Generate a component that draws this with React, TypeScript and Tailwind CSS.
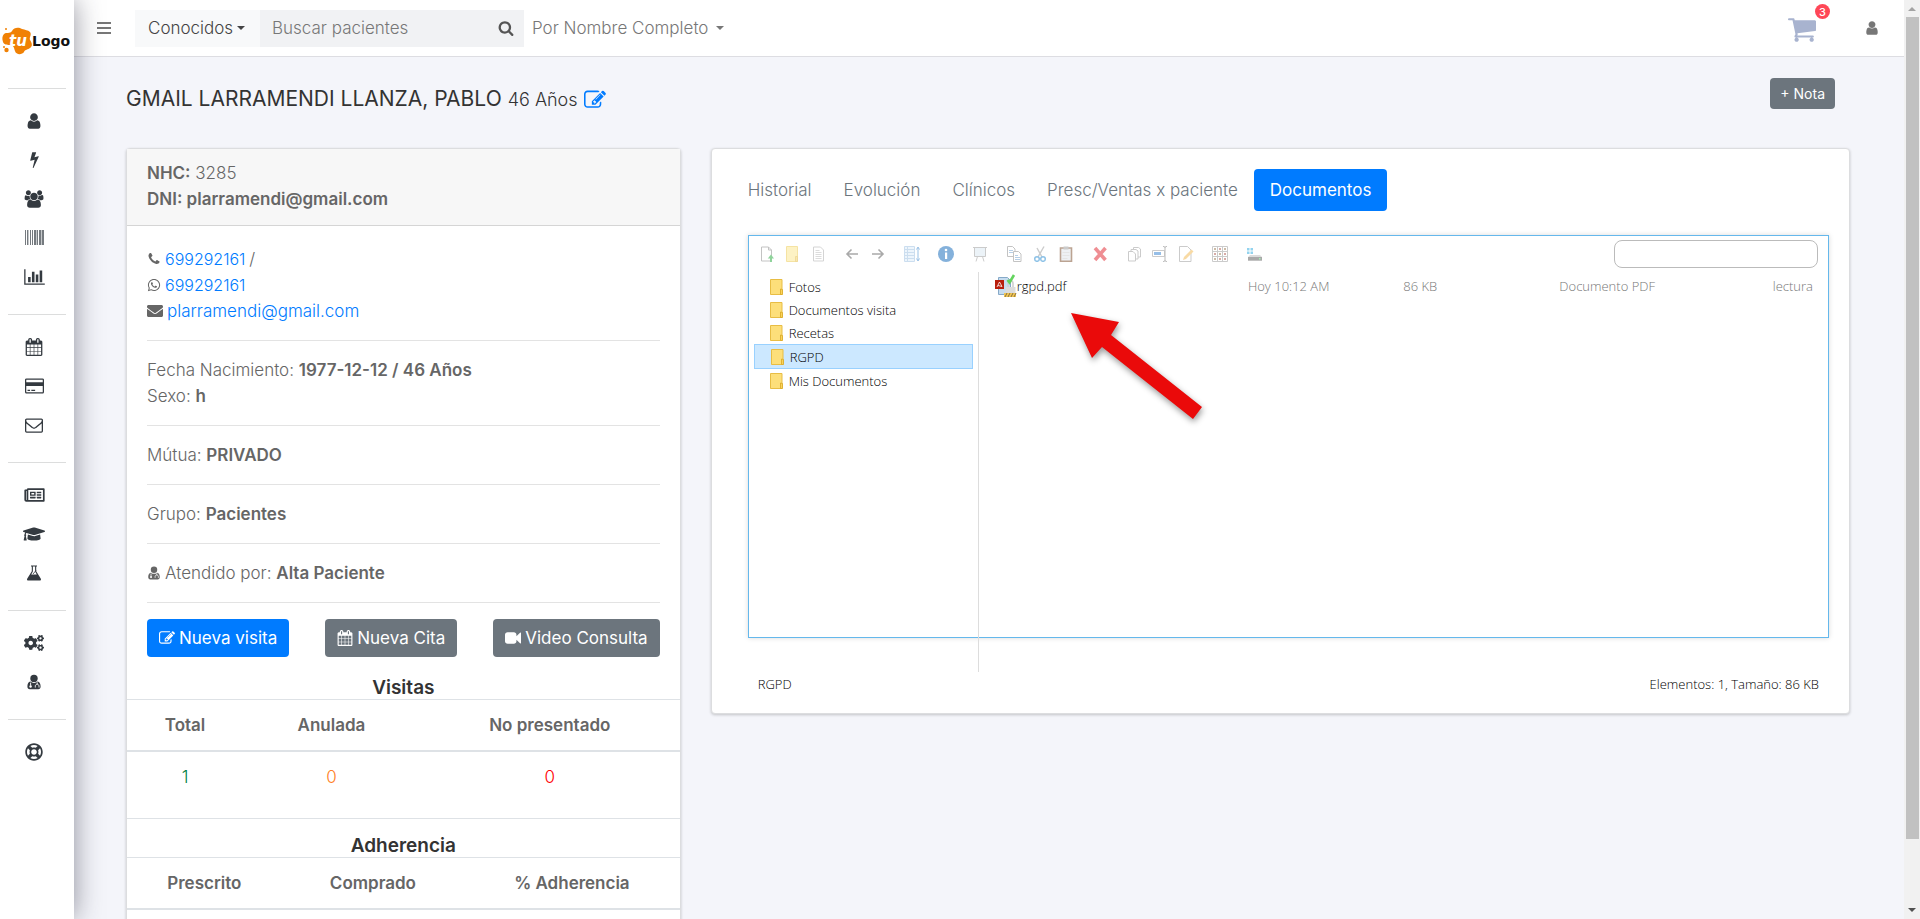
import type { ReactNode } from 'react';
import { FaCogs, FaEnvelope, FaGraduationCap, FaRegLifeRing, FaRegNewspaper, FaWhatsapp } from 'react-icons/fa';

interface GlyphProps {
  d: string;
  className?: string;
  box?: string;
}

const paths = {
  user: 'M1536 1399q0 109-62.5 187t-150.5 78h-854q-88 0-150.5-78t-62.5-187q0-85 8.5-160.5t31.5-152 58.5-131 94-89 134.5-34.5q131 128 313 128t313-128q76 0 134.5 34.5t94 89 58.5 131 31.5 152 8.5 160.5zm-256-887q0 159-112.5 271.5t-271.5 112.5-271.5-112.5-112.5-271.5 112.5-271.5 271.5-112.5 271.5 112.5 112.5 271.5z',
  bolt: 'M1333 566q18 20 7 44l-540 1157q-13 25-42 25-4 0-14-2-17-5-25.5-19t-4.5-30l197-808-406 101q-4 1-12 1-18 0-31-11-18-15-13-39l201-825q4-14 16-23t28-9h328q19 0 32 12.5t13 29.5q0 8-5 18l-171 463 396-98q8-2 12-2 19 0 34 15z',
  users: 'M657 896q-162 5-265 128h-134q-82 0-138-40.5t-56-118.5q0-353 124-353 6 0 43.5 21t97.5 42.5 119 21.5q67 0 133-23-5 37-5 66 0 159 93 294zm1071 637q0 120-73 189.5t-194 69.5h-874q-121 0-194-69.5t-73-189.5q0-53 3.5-103.5t14-109 26.5-108.5 43-97.5 62-81 85.5-53.5 111.5-20q10 0 43 21.5t73 48 107 48 135 21.5 135-21.5 107-48 73-48 43-21.5q61 0 111.5 20t85.5 53.5 62 81 43 97.5 26.5 108.5 14 109 3.5 103.5zm-1024-1277q0 106-75 181t-181 75-181-75-75-181 75-181 181-75 181 75 75 181zm704 384q0 159-112.5 271.5t-271.5 112.5-271.5-112.5-112.5-271.5 112.5-271.5 271.5-112.5 271.5 112.5 112.5 271.5zm576 225q0 78-56 118.5t-138 40.5h-134q-103-123-265-128 93-135 93-294 0-29-5-66 66 23 133 23 59 0 119-21.5t97.5-42.5 43.5-21q124 0 124 353zm-128-609q0 106-75 181t-181 75-181-75-75-181 75-181 181-75 181 75 75 181z',
  chart: 'M640 896v512h-256v-512h256zm384-512v1024h-256v-1024h256zm1024 1152v128h-2048v-1536h128v1408h1920zm-640-896v768h-256v-768h256zm384-384v1152h-256v-1152h256z',
  calendar: 'M192 1664h288v-288h-288v288zm352 0h320v-288h-320v288zm-352-352h288v-320h-288v320zm352 0h320v-320h-320v320zm-352-384h288v-288h-288v288zm736 736h320v-288h-320v288zm-384-736h320v-288h-320v288zm768 736h288v-288h-288v288zm-384-352h320v-320h-320v320zm-352-864v-288q0-13-9.5-22.5t-22.5-9.5h-64q-13 0-22.5 9.5t-9.5 22.5v288q0 13 9.5 22.5t22.5 9.5h64q13 0 22.5-9.5t9.5-22.5zm736 864h288v-320h-288v320zm-384-384h320v-288h-320v288zm384 0h288v-288h-288v288zm32-480v-288q0-13-9.5-22.5t-22.5-9.5h-64q-13 0-22.5 9.5t-9.5 22.5v288q0 13 9.5 22.5t22.5 9.5h64q13 0 22.5-9.5t9.5-22.5zm384-64v1280q0 52-38 90t-90 38h-1408q-52 0-90-38t-38-90v-1280q0-52 38-90t90-38h128v-96q0-66 47-113t113-47h64q66 0 113 47t47 113v96h384v-96q0-66 47-113t113-47h64q66 0 113 47t47 113v96h128q52 0 90 38t38 90z',
  card: 'M1760 128q66 0 113 47t47 113v1216q0 66-47 113t-113 47h-1600q-66 0-113-47t-47-113v-1216q0-66 47-113t113-47h1600zm-1600 128q-13 0-22.5 9.5t-9.5 22.5v224h1664v-224q0-13-9.5-22.5t-22.5-9.5h-1600zm1600 1280q13 0 22.5-9.5t9.5-22.5v-608h-1664v608q0 13 9.5 22.5t22.5 9.5h1600zm-1504-128v-128h256v128h-256zm384 0v-128h384v128h-384z',
  mail: 'M1664 1504v-768q-32 36-69 66-268 206-426 338-51 43-83 67t-86.5 48.5-102.5 24.5h-2q-48 0-102.5-24.5t-86.5-48.5-83-67q-158-132-426-338-37-30-69-66v768q0 13 9.5 22.5t22.5 9.5h1472q13 0 22.5-9.5t9.5-22.5zm0-1051v-24.5l-.5-13-3-12.5-5.5-9-9-7.5-14-2.5h-1472q-13 0-22.5 9.5t-9.5 22.5q0 168 147 284 193 152 401 317 6 5 35 29.5t46 37.5 44.5 31.5 50.5 27.5 43 9h2q20 0 43-9t50.5-27.5 44.5-31.5 46-37.5 35-29.5q208-165 401-317 54-43 100.5-115.5t46.5-131.5zm128-37v1088q0 66-47 113t-113 47h-1472q-66 0-113-47t-47-113v-1088q0-66 47-113t113-47h1472q66 0 113 47t47 113z',
  search: 'M1216 832q0-185-131.5-316.5t-316.5-131.5-316.5 131.5-131.5 316.5 131.5 316.5 316.5 131.5 316.5-131.5 131.5-316.5zm512 832q0 52-38 90t-90 38q-54 0-90-38l-343-342q-179 124-399 124-143 0-273.5-55.5t-225-150-150-225-55.5-273.5 55.5-273.5 150-225 225-150 273.5-55.5 273.5 55.5 225 150 150 225 55.5 273.5q0 220-124 399l343 343q37 37 37 90z',
  cart: 'M704 1536q0 52-38 90t-90 38-90-38-38-90 38-90 90-38 90 38 38 90zm896 0q0 52-38 90t-90 38-90-38-38-90 38-90 90-38 90 38 38 90zm128-1088v512q0 24-16.5 42.5t-40.5 21.5l-1044 122q13 60 13 70 0 16-24 64h920q26 0 45 19t19 45-19 45-45 19h-1024q-26 0-45-19t-19-45q0-11 8-31.5t16-36 21.5-40 15.5-29.5l-177-823h-204q-26 0-45-19t-19-45 19-45 45-19h256q16 0 28.5 6.5t19.5 15.5 13 24.5 8 26 5.5 29.5 4.5 26h1201q26 0 45 19t19 45z',
  edit: 'M888 1184l116-116-152-152-116 116v56h96v96h56zm440-720q-16-16-33 1l-350 350q-17 17-1 33t33-1l350-350q17-17 1-33zm80 594v190q0 119-84.5 203.5t-203.5 84.5h-832q-119 0-203.5-84.5t-84.5-203.5v-832q0-119 84.5-203.5t203.5-84.5h832q63 0 117 25 15 7 18 23 3 17-9 29l-49 49q-14 14-32 8-23-6-45-6h-832q-66 0-113 47t-47 113v832q0 66 47 113t113 47h832q66 0 113-47t47-113v-126q0-13 9-22l64-64q15-15 35-7t20 29zm-96-738l288 288-672 672h-288v-288zm444 132l-92 92-288-288 92-92q28-28 68-28t68 28l152 152q28 28 28 68t-28 68z',
  phone: 'M1600 1240q0 27-10 70.5t-21 68.5q-21 50-122 106-94 51-186 51-27 0-53-3.5t-57.5-12.5-47-14.5-55.5-20.5-49-18q-98-35-175-83-127-79-264-216t-216-264q-48-77-83-175-3-9-18-49t-20.5-55.5-14.5-47-12.5-57.5-3.5-53q0-92 51-186 56-101 106-122 25-11 68.5-21t70.5-10q14 0 21 3 18 6 53 76 11 19 30 54t35 63.5 31 53.5q3 4 17.5 25t21.5 35.5 7 28.5q0 20-28.5 50t-62 55-62 53-28.5 46q0 9 5 22.5t8.5 20.5 14 24 11.5 19q76 137 174 235t235 174q2 1 19 11.5t24 14 20.5 8.5 22.5 5q18 0 46-28.5t53-62 55-62 50-28.5q14 0 28.5 7t35.5 21.5 25 17.5q25 15 53.5 31t63.5 35 54 30q70 35 76 53 3 7 3 21z',
  video: 'M1792 352v1088q0 42-39 59-13 5-25 5-27 0-45-19l-403-403v166q0 119-84.5 203.5t-203.5 84.5h-704q-119 0-203.5-84.5t-84.5-203.5v-704q0-119 84.5-203.5t203.5-84.5h704q119 0 203.5 84.5t84.5 203.5v165l403-402q18-19 45-19 12 0 25 5 39 17 39 59z',
};

function Glyph({ d, className, box = '0 0 1792 1792' }: GlyphProps) {
  return (
    <svg viewBox={box} fill="currentColor" className={className} aria-hidden="true">
      <path d={d} />
    </svg>
  );
}

function DoctorIcon({ className }: { className?: string }) {
  return (
    <svg viewBox="0 0 16 16" className={className} aria-hidden="true">
      <circle cx="8" cy="4.4" r="3.7" fill="currentColor" />
      <path d="M4.4 7.6C2.2 8 1.4 10 1.4 12.6c0 1.7.9 2.7 2.3 2.7h8.6c1.4 0 2.3-1 2.3-2.7 0-2.6-.8-4.6-3-5-2 1.8-5.2 1.8-7.2 0z" fill="currentColor" />
      <path d="M4.6 8.6v3M11.2 8.4v1.8M9.3 13.5v-1.4c0-2.4 3.7-2.4 3.7 0v1.4" fill="none" stroke="#fff" strokeWidth="0.9" />
      <circle cx="4.6" cy="12.5" r="1.2" fill="#fff" />
    </svg>
  );
}

function BarcodeIcon() {
  return (
    <svg viewBox="0 0 19 15" className="h-[15px] w-[19px]" aria-hidden="true">
      <path d="M0 0h1v15H0zM2 0h1v15H2zM5 0h1v15H5zM7 0h1v15H7zM9 0h2v15H9zM12 0h1v15h-1zM14 0h2v15h-2zM17 0h2v15h-2z" fill="#757a7f" />
      <path d="M3 0h1v15H3zM11 0h1v15h-1zM16 0h1v15h-1z" fill="#c5c8ca" />
    </svg>
  );
}

function FlaskIcon() {
  return (
    <svg viewBox="0 0 16 16" className="h-4 w-4" aria-hidden="true">
      <path d="M5 .5h6v1h-.8v4.7l4.5 7.2c.7 1.2.2 2.2-1.2 2.2h-11c-1.4 0-1.9-1-1.2-2.2l4.5-7.2V1.5H5z" fill="currentColor" />
      <path d="M6.9 1.5h2.2v5.1l1.7 2.8H5.2l1.7-2.8z" fill="#fff" />
      <path d="M7 9l3-3.5" stroke="currentColor" strokeWidth="0.8" />
    </svg>
  );
}

function Caret() {
  return <span className="inline-block border-x-[4px] border-t-[4px] border-x-transparent border-t-current" />;
}

function Logo() {
  return (
    <svg viewBox="0 0 74 36" className="h-9 w-[74px]" role="img" aria-label="tuLogo">
      <path d="M4 11c2-2 6 0 8-3 2-4 7-4 10-2 3 1 6 1 8 3 2 3-1 5 0 8 2 3 3 6 0 8-2 2-5 1-6 4-2 3-8 3-9-1-1-3-1-5-4-6-3 0-7 0-8-3-1-3-1-6 1-8z" fill="#f08105" />
      <circle cx="6" cy="6" r="1" fill="#f08105" />
      <circle cx="6.500" cy="27" r="2.200" fill="#f08105" />
      <circle cx="4" cy="24" r="1" fill="#f08105" />
      <text x="9" y="23" fontFamily="'DejaVu Sans', sans-serif" fontSize="15" fontWeight="700" fontStyle="italic" fill="#fff">tu</text>
      <text x="32" y="23" fontFamily="'DejaVu Sans', sans-serif" fontSize="14" fontWeight="700" fill="#111">Logo</text>
    </svg>
  );
}

const menu: { label: string; icon: ReactNode }[][] = [
  [
    { label: 'Pacientes', icon: <Glyph d={paths.user} className="h-[18px] w-[18px]" /> },
    { label: 'Accesos', icon: <Glyph d={paths.bolt} className="h-[17px] w-[17px]" /> },
    { label: 'Grupos', icon: <Glyph d={paths.users} box="0 0 2048 1792" className="h-[18px] w-5" /> },
    { label: 'Productos', icon: <BarcodeIcon /> },
    { label: 'Informes', icon: <Glyph d={paths.chart} box="0 0 2048 1792" className="h-[18px] w-[21px]" /> },
  ],
  [
    { label: 'Agenda', icon: <Glyph d={paths.calendar} className="h-[18px] w-[18px]" /> },
    { label: 'Pagos', icon: <Glyph d={paths.card} box="0 0 1920 1792" className="h-[18px] w-[19px]" /> },
    { label: 'Mensajes', icon: <Glyph d={paths.mail} className="h-[18px] w-[18px]" /> },
  ],
  [
    { label: 'Noticias', icon: <FaRegNewspaper className="h-[18px] w-[21px]" /> },
    { label: 'Formación', icon: <FaGraduationCap className="h-[18px] w-[22px]" /> },
    { label: 'Laboratorio', icon: <FlaskIcon /> },
  ],
  [
    { label: 'Ajustes', icon: <FaCogs className="h-[18px] w-5" /> },
    { label: 'Doctores', icon: <DoctorIcon className="h-4 w-4" /> },
  ],
  [{ label: 'Ayuda', icon: <FaRegLifeRing className="h-[18px] w-[18px]" /> }],
];

function Sidebar() {
  return (
    <aside className="z-10 flex w-[74px] shrink-0 flex-col bg-white shadow-[0_0_28px_rgba(40,40,60,0.5)]">
      <div className="flex h-[88px] items-start pt-[23px]">
        <Logo />
      </div>
      <nav className="px-2">
        {menu.map((group, i) => (
          <ul key={i} className="border-t border-[#dcdddd] pt-3 pb-[18px]">
            {group.map((item) => (
              <li key={item.label}>
                <a href="#" aria-label={item.label} className="flex h-[39px] items-center justify-center pr-[6px] text-[#343a40]">
                  {item.icon}
                </a>
              </li>
            ))}
          </ul>
        ))}
      </nav>
    </aside>
  );
}

function Header() {
  return (
    <header className="flex h-[57px] shrink-0 items-center border-b border-[#dddde2] bg-white pr-6 pl-[23px] text-[#777]">
      <button aria-label="Menú">
        <svg viewBox="0 0 14 12" className="h-3 w-[14px]" aria-hidden="true">
          <path d="M0 0h14v2H0zM0 5h14v2H0zM0 10h14v2H0z" fill="#777" />
        </svg>
      </button>
      <div className="ml-6 flex h-[37px]">
        <button className="flex w-[125px] items-center gap-1 bg-[#f8f9fa] pl-[13px] text-[#444]">
          Conocidos <Caret />
        </button>
        <div className="flex w-[264px] items-center bg-[#f1f2f4] pr-[10px] pl-3">
          <input
            type="text"
            aria-label="Buscar pacientes"
            placeholder="Buscar pacientes"
            className="min-w-0 flex-1 bg-transparent outline-none placeholder:text-[#777]"
          />
          <button aria-label="Buscar">
            <Glyph d={paths.search} className="h-4 w-4 text-[#555]" />
          </button>
        </div>
      </div>
      <button className="ml-2 flex items-center gap-2">
        Por Nombre Completo <Caret />
      </button>
      <div className="ml-auto flex items-center gap-12">
        <button aria-label="Carrito" className="relative pt-1">
          <Glyph d={paths.cart} box="64 256 1664 1408" className="h-6 w-7 text-[#a8b3cf]" />
          <span className="absolute -top-[10px] -right-[14px] flex h-[15px] w-[15px] items-center justify-center rounded-full bg-[#ff4757] text-[11px] font-medium text-white">
            3
          </span>
        </button>
        <button aria-label="Usuario">
          <Glyph d={paths.user} className="h-4 w-4" />
        </button>
      </div>
    </header>
  );
}

interface StatsProps {
  title: string;
  headers: string[];
  widths: string[];
  children?: ReactNode;
}

function StatsTable({ title, headers, widths, children }: StatsProps) {
  return (
    <section>
      <h3 className="text-center text-[19px] leading-[22px] font-semibold text-[#333]">{title}</h3>
      <table className="w-full table-fixed border-t border-[#dee2e6] text-center">
        <thead>
          <tr className="border-b-2 border-[#dee2e6]">
            {headers.map((h, i) => (
              <th key={h} className={`py-3 font-semibold ${widths[i]}`}>{h}</th>
            ))}
          </tr>
        </thead>
        <tbody>{children}</tbody>
      </table>
    </section>
  );
}

function PatientCard() {
  return (
    <div className="self-start rounded-sm border border-[#dcdddf] bg-white shadow-[0_1px_3px_rgba(0,0,0,0.2)]">
      <div className="border-b border-[#d5d5d5] bg-[#f7f7f7] px-5 pt-[11px] pb-[13px]">
        <p><strong className="font-semibold">NHC:</strong> 3285</p>
        <p><strong className="font-semibold">DNI: plarramendi@gmail.com</strong></p>
      </div>
      <div className="divide-y divide-[#e3e3e3] px-5 pt-1">
        <div className="py-4">
          <p className="flex items-center gap-1">
            <Glyph d={paths.phone} className="h-[14px] w-[14px]" />
            <a href="#" className="text-base leading-[26px] text-[#007bff]">699292161</a> /
          </p>
          <p className="flex items-center gap-1">
            <FaWhatsapp className="h-[14px] w-[14px]" />
            <a href="#" className="text-base leading-[26px] text-[#007bff]">699292161</a>
          </p>
          <p className="flex items-center gap-1">
            <FaEnvelope className="h-4 w-4" />
            <a href="#" className="text-[#007bff]">plarramendi@gmail.com</a>
          </p>
        </div>
        <div className="py-4">
          <p>Fecha Nacimiento: <strong className="font-semibold">1977-12-12 / 46 Años</strong></p>
          <p>Sexo: <strong className="font-semibold">h</strong></p>
        </div>
        <p className="py-4">Mútua: <strong className="font-semibold">PRIVADO</strong></p>
        <p className="py-4">Grupo: <strong className="font-semibold">Pacientes</strong></p>
        <p className="flex items-center gap-1 py-4">
          <DoctorIcon className="h-[14px] w-[14px]" />
          <span>Atendido por: <strong className="font-semibold">Alta Paciente</strong></span>
        </p>
        <div className="flex justify-between pt-4 pb-5 font-normal text-white">
          <button className="flex h-[38px] items-center gap-1 rounded-sm bg-[#007bff] px-3">
            <Glyph d={paths.edit} className="h-4 w-4" /> Nueva visita
          </button>
          <button className="flex h-[38px] items-center gap-1 rounded-sm bg-[#6c757d] px-3">
            <Glyph d={paths.calendar} className="h-4 w-4" /> Nueva Cita
          </button>
          <button className="flex h-[38px] items-center gap-1 rounded-sm bg-[#6c757d] px-3">
            <Glyph d={paths.video} className="h-4 w-4" /> Video Consulta
          </button>
        </div>
      </div>
      <StatsTable title="Visitas" headers={['Total', 'Anulada', 'No presentado']} widths={['w-[21%]', 'w-[32%]', 'w-[47%]']}>
        <tr>
          <td className="p-3 text-[#008040]">1</td>
          <td className="p-3 text-[#ff7f27]">0</td>
          <td className="p-3 text-[#ff0000]">0</td>
        </tr>
      </StatsTable>
      <div className="mt-4 border-t border-[#dee2e6] pt-4">
        <StatsTable title="Adherencia" headers={['Prescrito', 'Comprado', '% Adherencia']} widths={['w-[28%]', 'w-[33%]', 'w-[39%]']}>
          <tr>
            <td colSpan={3} className="h-[50px]" />
          </tr>
        </StatsTable>
      </div>
    </div>
  );
}

const page = 'M3.5 1h7l3 3v11h-10z';

const tools: { label: string; icon: ReactNode }[][] = [
  [
    {
      label: 'Subir',
      icon: (
        <>
          <path d={page} fill="#fff" stroke="#888" />
          <path d="M10.5 1v3h3" fill="none" stroke="#888" />
          <path d="M12 16v-3.5H9.8L13 8.500l3 4h-2V16z" fill="#22a93a" />
        </>
      ),
    },
    {
      label: 'Nueva carpeta',
      icon: (
        <>
          <path d="M2.5.5h11v15h-11z" fill="#fde68a" stroke="#ecc84a" />
          <path d="M11.5 10.5h2v5h-2z" fill="#f6d25c" stroke="#dcae2d" strokeWidth="0.8" />
        </>
      ),
    },
    {
      label: 'Nuevo archivo',
      icon: (
        <>
          <path d={page} fill="#fff" stroke="#aaa" />
          <path d="M5.5 4.5h4M5.5 6.5h6M5.5 8.5h6M5.5 10.5h6M5.5 12.5h6" stroke="#bbb" />
        </>
      ),
    },
  ],
  [
    { label: 'Atrás', icon: <path d="M14 8H3M7.5 3.5L3 8l4.5 4.5" fill="none" stroke="#555" strokeWidth="1.6" /> },
    { label: 'Adelante', icon: <path d="M2 8h11M8.5 3.5L13 8l-4.5 4.5" fill="none" stroke="#555" strokeWidth="1.6" /> },
  ],
  [
    {
      label: 'Seleccionar todo',
      icon: (
        <>
          <path d="M.5.5h10v15H.5z" fill="#dcecfa" stroke="#9bbfe0" />
          <path d="M1 3.5h9M1 6.5h9M1 9.5h9M1 12.5h9M3.5 1v14" stroke="#9bbfe0" />
          <path d="M14 1.5v13M12.500 3.500L14 1l1.500 2.500M12.500 12.500L14 15l1.500-2.500" fill="none" stroke="#3583cc" />
        </>
      ),
    },
  ],
  [
    {
      label: 'Información',
      icon: (
        <>
          <circle cx="8" cy="8" r="8" fill="#0c65b8" />
          <path d="M7 6.5h2.2V13H7z" fill="#fff" />
          <circle cx="8" cy="4" r="1.3" fill="#fff" />
        </>
      ),
    },
  ],
  [
    {
      label: 'Vista previa',
      icon: (
        <>
          <path d="M2.5 1.500h11v9h-11z" fill="#dbe9f3" stroke="#999" />
          <path d="M1 1.500h14M5.500 10.500L4 15.500M10.500 10.500L12 15.500" fill="none" stroke="#999" />
        </>
      ),
    },
  ],
  [
    {
      label: 'Copiar',
      icon: (
        <>
          <path d="M1.5.5h5L9 3v7.500H1.500z" fill="#fff" stroke="#888" />
          <path d="M7.500 5.500h5L15 8v7.500H7.500z" fill="#fff" stroke="#888" />
          <path d="M3 4.500h4M3 6.500h4M9 9.500h3M9 11.500h5M9 13.500h5" stroke="#70a0d0" />
        </>
      ),
    },
    {
      label: 'Cortar',
      icon: (
        <>
          <path d="M12 .5L6 11M5 2l5 9" fill="none" stroke="#999" strokeWidth="1.4" />
          <circle cx="5" cy="13" r="2.3" fill="none" stroke="#1f86cf" strokeWidth="1.5" />
          <circle cx="11" cy="13" r="2.3" fill="none" stroke="#1f86cf" strokeWidth="1.5" />
        </>
      ),
    },
    {
      label: 'Pegar',
      icon: (
        <>
          <path d="M2.500 2h11v13.300h-11z" fill="#dfe5ea" stroke="#7a4a28" strokeWidth="1.6" />
          <path d="M5.500.5h5v3h-5z" fill="#999" />
          <path d="M4.500 6.500h7M4.500 9.500h7M4.500 12.500h5" stroke="#ccc" />
        </>
      ),
    },
  ],
  [{ label: 'Eliminar', icon: <path d="M3 2l10.500 12M13.500 2L3 14" stroke="#e0202a" strokeWidth="3.6" /> }],
  [
    {
      label: 'Duplicar',
      icon: (
        <>
          <path d="M7.500 1.500h5L14.500 3v8h-7z" fill="#fff" stroke="#999" />
          <path d="M5 3.500h5L12 5v8H5z" fill="#fff" stroke="#999" />
          <path d="M2.500 5.500H7L9.500 8v7h-7z" fill="#fff" stroke="#999" />
        </>
      ),
    },
    {
      label: 'Renombrar',
      icon: (
        <>
          <path d="M.5 4.500h12v6H.5z" fill="#fff" stroke="#999" />
          <path d="M2 6h7v3H2z" fill="#2f7fd0" />
          <path d="M13 1v14M11 .5c1.500 0 2 .3 2 1 0-.7.5-1 2-1M11 15.500c1.500 0 2-.3 2-1 0 .7.5 1 2 1" fill="none" stroke="#777" />
        </>
      ),
    },
    {
      label: 'Editar',
      icon: (
        <>
          <path d="M1.500.5h8L13 4v11.500H1.500z" fill="#fff" stroke="#999" />
          <path d="M5 14l1-3 7.500-7.500 2 2L8 13z" fill="#f3b64c" />
        </>
      ),
    },
  ],
  [
    {
      label: 'Iconos',
      icon: (
        <>
          <path d="M.5.5h15v15H.5zM.5 5.500h15M.5 10.500h15M5.500.5v15M10.500.5v15" fill="none" stroke="#999" />
          <path d="M2 2h2v2H2zM12 2h2v2h-2zM7 7h2v2H7zM2 12h2v2H2z" fill="#9b7a50" />
          <path d="M7 2h2v2H7zM2 7h2v2H2zM12 7h2v2h-2zM7 12h2v2H7zM12 12h2v2h-2z" fill="#b05a50" />
        </>
      ),
    },
  ],
  [
    {
      label: 'Conectar',
      icon: (
        <>
          <path d="M1 2h2.500v2.500H1zM4.500 2H7v2.500H4.500zM1 5.500h2.500V8H1zM4.500 5.500H7V8H4.500z" fill="#27a9e0" />
          <path d="M4 9h10l2 2v4H2v-4z" fill="#bbb" />
          <path d="M2 11h14v3.500H2z" fill="#555" />
          <path d="M13 12h1.500v1.500H13z" fill="#4be06a" />
        </>
      ),
    },
  ],
];

const folders = ['Fotos', 'Documentos visita', 'Recetas', 'RGPD', 'Mis Documentos'];

function FolderIcon() {
  return (
    <svg viewBox="0 0 13 16" className="h-4 w-[13px]" aria-hidden="true">
      <path d="M.5.5H12v15H.5z" fill="#fddf7a" stroke="#e8bd44" />
      <path d="M10.500 10v5.500h2v-5z" fill="#fbd35a" stroke="#d8a825" strokeWidth="0.8" />
    </svg>
  );
}

function PdfIcon() {
  return (
    <svg viewBox="0 0 22 24" className="h-6 w-[22px]" aria-hidden="true">
      <path d="M3.500 3.500h9l3 3v14h-12z" fill="#c6dcef" stroke="#86a9c8" />
      <path d="M13 13V9.500c0-3.500 5-3.500 5 0V13" fill="none" stroke="#d0d0d0" strokeWidth="1.6" />
      <path d="M10.500 13h10v6h-10z" fill="#dcdcdc" />
      <path d="M9 19h12v4H9z" fill="#f2c552" />
      <path d="M10 23l2-4M13 23l2-4M16 23l2-4M19 23l2-4" stroke="#8a7440" />
      <path d="M0 6h9v9H0z" fill="#b81e0c" />
      <path d="M2 13l2.500-5L7 12.500 3 11.500" fill="none" stroke="#fff" strokeWidth="0.8" />
      <path d="M12.500 6l2 2.500L19 1" fill="none" stroke="#63d45e" strokeWidth="2.6" />
    </svg>
  );
}

function FileManager() {
  return (
    <div className="font-['Open_Sans',sans-serif] text-[13px] leading-[22px] font-light text-black">
      <div className="h-[403px] border border-[#65b8ec] shadow-[0_0_5px_rgba(0,0,0,0.15)]">
        <div className="flex h-9 items-center justify-between pr-[10px] pl-1">
          <div className="flex gap-2">
            {tools.map((group, i) => (
              <div key={i} className="flex">
                {group.map((tool) => (
                  <button key={tool.label} aria-label={tool.label} className="flex w-[26px] justify-center opacity-50">
                    <svg viewBox="0 0 16 16" className="h-4 w-4" aria-hidden="true">{tool.icon}</svg>
                  </button>
                ))}
              </div>
            ))}
          </div>
          <input type="search" aria-label="Buscar archivos" className="h-7 w-[204px] rounded-lg border border-[#bbb] px-2 outline-none" />
        </div>
        <div className="flex h-[400px]">
          <ul className="w-[230px] shrink-0 border-r border-[#ddd] px-[5px] pt-[3px]">
            {folders.map((name) => (
              <li
                key={name}
                className={
                  name === 'RGPD'
                    ? 'flex h-[25px] items-center gap-[6px] border border-[#99d1ff] bg-[#cce8ff] pl-4'
                    : 'flex h-[23px] items-center gap-[6px] pl-4'
                }
              >
                <FolderIcon /> {name}
              </li>
            ))}
          </ul>
          <div className="min-w-0 flex-1 pt-[2px]">
            <table className="w-full table-fixed text-[#777]">
              <tbody>
                <tr>
                  <td className="w-[29%] pl-4 text-black">
                    <span className="flex items-center"><PdfIcon /> rgpd.pdf</span>
                  </td>
                  <td className="w-[15%] text-center">Hoy 10:12 AM</td>
                  <td className="w-[16%] text-center">86 KB</td>
                  <td className="w-[28%] text-center">Documento PDF</td>
                  <td className="w-[12%] pr-[15px] text-right">lectura</td>
                </tr>
              </tbody>
            </table>
          </div>
        </div>
      </div>
      <div className="mt-[35px] flex justify-between px-[10px] pb-[18px]">
        <span>RGPD</span>
        <span>Elementos: 1, Tamaño: 86 KB</span>
      </div>
    </div>
  );
}

function DocumentsCard() {
  const tabs = ['Historial', 'Evolución', 'Clínicos', 'Presc/Ventas x paciente', 'Documentos'];

  return (
    <div className="relative col-span-2 self-start rounded-sm border border-[#dcdddf] bg-white px-5 pt-5 shadow-[0_1px_3px_rgba(0,0,0,0.2)]">
      <nav className="flex">
        {tabs.map((tab) => (
          <a
            key={tab}
            href="#"
            className={
              tab === 'Documentos'
                ? 'flex h-[42px] items-center rounded-sm bg-[#007bff] px-4 font-normal text-white'
                : 'flex h-[42px] items-center px-4 text-[#6c757d]'
            }
          >
            {tab}
          </a>
        ))}
      </nav>
      <div className="mt-6 pl-4">
        <FileManager />
      </div>
      {/* Flecha sobre el archivo */}
      <svg
        viewBox="0 0 140 112"
        className="pointer-events-none absolute top-40 left-[355px] h-[112px] w-[140px] drop-shadow-[1px_3px_3px_rgba(0,0,0,0.4)]"
        aria-hidden="true"
      >
        <path d="M4 4l48 9-8 13 91 72-9 12-91-72-10 11z" fill="#ea0a0a" />
      </svg>
    </div>
  );
}

export default function App() {
  return (
    <div className="flex h-screen overflow-hidden bg-[#f4f5fa] font-['Inter',sans-serif] text-[17px] leading-[26px] font-light text-[#666]">
      <Sidebar />
      <div className="flex min-w-0 flex-1 flex-col">
        <Header />
        <main className="flex-1 overflow-hidden pt-5 pr-[54px] pl-[52px]">
          <div className="flex h-[71px] items-start justify-between">
            <h1 className="flex items-baseline gap-[6px] pt-[9px] text-[21px] font-normal text-[#333]">
              GMAIL LARRAMENDI LLANZA, PABLO
              <span className="text-lg leading-[26px] font-light">46 Años</span>
              <a href="#" aria-label="Editar paciente" className="self-center text-[#007bff]">
                <Glyph d={paths.edit} className="h-[22px] w-[22px]" />
              </a>
            </h1>
            <button className="mt-px mr-[15px] h-[31px] rounded-sm bg-[#6c757d] px-[10px] text-sm font-normal text-white">+ Nota</button>
          </div>
          <div className="grid grid-cols-3 gap-[30px]">
            <PatientCard />
            <DocumentsCard />
          </div>
        </main>
      </div>
      {/* Barra de desplazamiento */}
      <div className="flex w-4 shrink-0 flex-col items-center bg-[#f1f1f1]">
        <span className="mt-[7px] mb-[6px] border-x-[4px] border-b-[4px] border-x-transparent border-b-[#a3a3a3]" />
        <span className="min-h-0 w-[13px] grow-[821] basis-0 bg-[#c1c1c1]" />
        <span className="grow-[69] basis-0" />
        <span className="mb-[7px] border-x-[4px] border-t-[4px] border-x-transparent border-t-[#505050]" />
      </div>
    </div>
  );
}
